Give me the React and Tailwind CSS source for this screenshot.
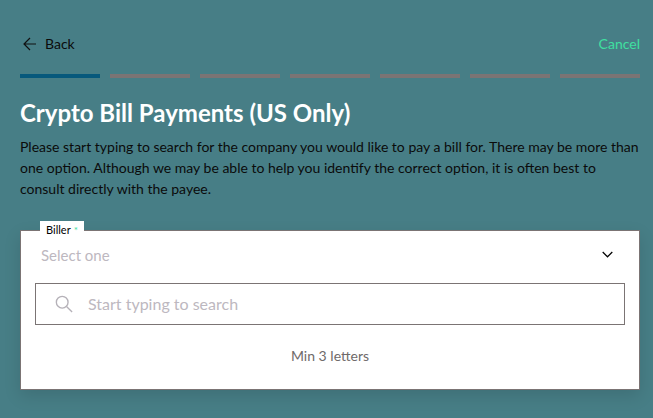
import React from "react";

const steps = [1, 2, 3, 4, 5, 6, 7];

const App = () => {
  return (
    <div className="h-[418px] w-[653px] overflow-hidden bg-[#477e86] pl-5 pr-[13px] pt-[34px] font-['Lato',sans-serif]">
      {/* Header */}
      <div className="flex h-5 items-start justify-between">
        <div className="flex h-[19px] items-center gap-[9px] text-[14px] text-[#0b0b0b]">
          <svg width="16" height="16" viewBox="0 0 16 16" fill="none" stroke="#111" strokeWidth="1.2">
            <path d="M16 8H4.5M10 2 4 8l6 6" />
          </svg>
          <span>Back</span>
        </div>
        <span className="text-[14px] leading-[19px] text-[#3fe0a0]">Cancel</span>
      </div>

      {/* Progress */}
      <div className="mt-5 flex gap-[10px]">
        {steps.map((s) => (
          <div key={s} className={`h-1 w-20 ${s === 1 ? "bg-[#07597c]" : "bg-[#7b7474]"}`} />
        ))}
      </div>

      <h1 className="mt-[19px] text-[24px] font-bold leading-8 text-white">Crypto Bill Payments (US Only)</h1>
      <p className="mt-[7px] text-[14px] leading-[21px] text-[#0b0b0b]">
        Please start typing to search for the company you would like to pay a bill for. There may be more than one option. Although we may be able to help you identify the correct option, it is often best to consult directly with the payee.
      </p>

      {/* Biller card */}
      <div className="relative mt-[31px] h-[160px] w-[620px] border border-[#7b7474] bg-white px-[14px] shadow-[0_6px_16px_rgba(0,0,0,0.12)]">
        <div className="absolute left-[19px] top-[-10px] flex h-[18px] w-11 items-center bg-white pl-[6px] text-[11px] text-black">
          Biller<span className="ml-[3px] text-[10px] text-[#3fe0a0]">*</span>
        </div>
        <div className="flex h-[52px] items-center justify-between pb-1 pl-[6px] pr-[12px]">
          <span className="text-[15px] text-[#bdb8c0]">Select one</span>
          <svg className="mb-[2px]" width="11" height="7" viewBox="0 0 11 7" fill="none" stroke="#000" strokeWidth="1.25">
            <path d="M.7 1 5.5 5.8 10.3 1" />
          </svg>
        </div>
        <div className="flex h-[42px] w-[590px] items-center border border-[#7b7474] pl-[19px]">
          <svg width="18" height="18" viewBox="0 0 20 20" fill="none" stroke="#b5b1b8" strokeWidth="1.5">
            <circle cx="8" cy="8" r="6.5" />
            <path d="m12.8 12.8 6.2 6.2" />
          </svg>
          <span className="ml-[15px] text-[16px] text-[#bdb8c0]">Start typing to search</span>
        </div>
        <div className="mt-5 text-center text-[14px] text-[#6f6a6a]">Min 3 letters</div>
      </div>
    </div>
  );
};

export default App;
